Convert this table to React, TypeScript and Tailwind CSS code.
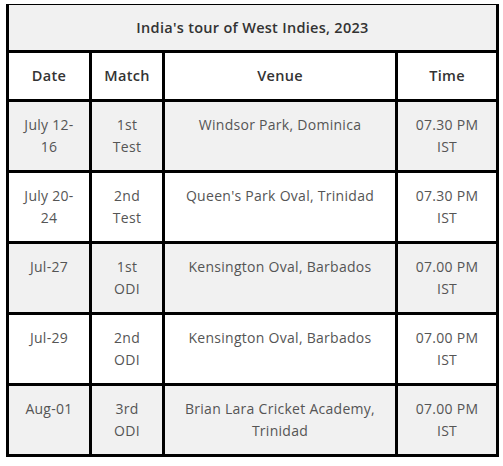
const rows = [
  { date: "July 12-16", match: "1st Test", venue: "Windsor Park, Dominica", time: "07.30 PM IST" },
  { date: "July 20-24", match: "2nd Test", venue: "Queen's Park Oval, Trinidad", time: "07.30 PM IST" },
  { date: "Jul-27", match: "1st ODI", venue: "Kensington Oval, Barbados", time: "07.00 PM IST" },
  { date: "Jul-29", match: "2nd ODI", venue: "Kensington Oval, Barbados", time: "07.00 PM IST" },
  { date: "Aug-01", match: "3rd ODI", venue: "Brian Lara Cricket Academy, Trinidad", time: "07.00 PM IST" },
];

export default function App() {
  return (
    <div className="h-[466px] w-[503px] bg-white pl-[6px] pt-[4px] font-['Open_Sans',sans-serif]">
      <table className="w-[490px] table-fixed border-collapse text-center">
        <colgroup>
          <col className="w-[83px]" />
          <col className="w-[73px]" />
          <col className="w-[233px]" />
          <col className="w-[101px]" />
        </colgroup>
        <thead>
          <tr className="h-[47px] bg-[#f1f1f1]">
            <th
              colSpan={4}
              className="border-x-[3px] border-t border-b-[3px] border-black text-[14.5px] font-semibold tracking-[0.02em] text-[#333]"
            >
              India's tour of West Indies, 2023
            </th>
          </tr>
          <tr className="h-[49px] bg-white">
            {["Date", "Match", "Venue", "Time"].map((h) => (
              <th key={h} className="border-[3px] border-black text-[14.5px] font-semibold tracking-[0.02em] text-[#333]">
                {h}
              </th>
            ))}
          </tr>
        </thead>
        <tbody>
          {rows.map((r, i) => (
            <tr key={r.date} className={`h-[71px] ${i % 2 === 0 ? "bg-[#f1f1f1]" : "bg-white"}`}>
              {[r.date, r.match, r.venue, r.time].map((c, j) => (
                <td
                  key={j}
                  className="border-[3px] border-black px-[10px] pb-[10px] pt-[12px] align-top text-[14px] leading-[22px] tracking-[0.02em] text-[#555]"
                >
                  {c}
                </td>
              ))}
            </tr>
          ))}
        </tbody>
      </table>
    </div>
  );
}
